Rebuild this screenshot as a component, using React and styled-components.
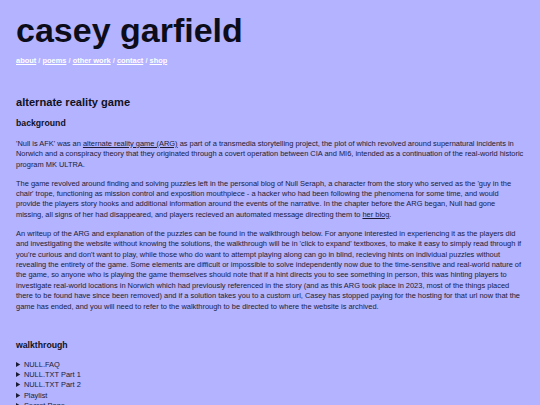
import React from "react";
import styled, { createGlobalStyle } from "styled-components";

const Global = createGlobalStyle`
  html, body { margin: 0; padding: 0; background: #b3b3ff; }
  body { font-family: "Liberation Sans", Arial, sans-serif; color: #1c1c36; }
`;

const Page = styled.div`
  padding: 0 16px 20px 16px;
  font-size: 7.45px;
  line-height: 1.4;
`;

const Header = styled.header`
  padding-top: 13px;
`;

const Title = styled.h1`
  margin: 0;
  font-size: 34px;
  line-height: 1;
  font-weight: 700;
  color: #0d0d1a;
`;

const Nav = styled.nav`
  margin-top: 9px;
  font-weight: 700;
  color: #ffffff;
`;

const NavLink = styled.a`
  color: #ffffff;
  text-decoration: underline;
`;

const Sep = styled.span`
  color: #f4f4ff;
`;

const Main = styled.main`
  margin-top: 30px;
`;

const H2 = styled.h2`
  margin: 0 0 8.6px;
  font-size: 11.1px;
  line-height: 1.2;
  color: #111122;
`;

const H3 = styled.h3`
  margin: 0 0 10px;
  font-size: 8.7px;
  line-height: 1.2;
  color: #111122;
`;

const P = styled.p`
  margin: 0 0 8.5px;
`;

const InlineLink = styled.a`
  color: inherit;
  text-decoration: underline;
`;

const Section = styled.section`
  margin-top: ${(p) => p.$gap || 0}px;
`;

const List = styled.div`
  margin-top: 1.5px;
`;

const Details = styled.details`
  line-height: 1.37;
`;

const Summary = styled.summary`
  cursor: pointer;
`;

const links = ["about", "poems", "other work", "contact", "shop"];
const walk = ["NULL.FAQ", "NULL.TXT Part 1", "NULL.TXT Part 2", "Playlist", "Secret Page", "Final Puzzle"];

export default function App() {
  return (
    <>
      <Global />
      <Page>
        <Header>
          <Title>casey garfield</Title>
          <Nav>
            {links.map((l, i) => (
              <React.Fragment key={l}>
                {i > 0 && <Sep> / </Sep>}
                <NavLink href="#">{l}</NavLink>
              </React.Fragment>
            ))}
          </Nav>
        </Header>
        <Main>
          <H2>alternate reality game</H2>
          <Section>
            <H3>background</H3>
            <P>
              'Null is AFK' was an <InlineLink href="#">alternate reality game (ARG)</InlineLink> as part of a transmedia storytelling project, the plot of which revolved around supernatural incidents in Norwich and a conspiracy theory that they originated through a covert operation between CIA and MI6, intended as a continuation of the real-world historic program MK ULTRA.
            </P>
            <P>
              The game revolved around finding and solving puzzles left in the personal blog of Null Seraph, a character from the story who served as the 'guy in the chair' trope, functioning as mission control and exposition mouthpiece - a hacker who had been following the phenomena for some time, and would provide the players story hooks and additional information around the events of the narrative. In the chapter before the ARG began, Null had gone missing, all signs of her had disappeared, and players recieved an automated message directing them to <InlineLink href="#">her blog</InlineLink>.
            </P>
            <P>
              An writeup of the ARG and explanation of the puzzles can be found in the walkthrough below. For anyone interested in experiencing it as the players did and investigating the website without knowing the solutions, the walkthrough will be in 'click to expand' textboxes, to make it easy to simply read through if you're curious and don't want to play, while those who do want to attempt playing along can go in blind, recieving hints on individual puzzles without revealing the entirety of the game. Some elements are difficult or impossible to solve independently now due to the time-sensitive and real-world nature of the game, so anyone who is playing the game themselves should note that if a hint directs you to see something in person, this was hinting players to investigate real-world locations in Norwich which had previously referenced in the story (and as this ARG took place in 2023, most of the things placed there to be found have since been removed) and if a solution takes you to a custom url, Casey has stopped paying for the hosting for that url now that the game has ended, and you will need to refer to the walkthrough to be directed to where the website is archived.
            </P>
          </Section>
          <Section $gap={27.5}>
            <H3>walkthrough</H3>
            <List>
              {walk.map((w) => (
                <Details key={w}>
                  <Summary>{w}</Summary>
                </Details>
              ))}
            </List>
          </Section>
        </Main>
      </Page>
    </>
  );
}
